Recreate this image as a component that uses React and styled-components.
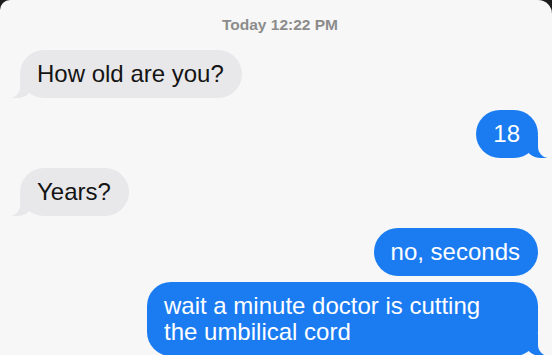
import React from "react";
import styled, { createGlobalStyle, css } from "styled-components";

const PAGE_BG = "#f7f7f7";
const GREY = "#e8e8ea";
const BLUE = "#1b7cf2";

const Global = createGlobalStyle`
  html, body { margin: 0; padding: 0; background: #1c1c1c; }
  body { font-family: "Liberation Sans", Arial, sans-serif; }
`;

const Screen = styled.div`
  width: 552px;
  height: 355px;
  box-sizing: border-box;
  background: ${PAGE_BG};
  border-top-left-radius: 10px;
  border-top-right-radius: 14px;
  overflow: hidden;
  display: flex;
  flex-direction: column;
  padding: 16px 14px 0 20px;
`;

const Stamp = styled.div`
  text-align: center;
  font-size: 15.5px;
  font-weight: 700;
  line-height: 18px;
  color: #8c8c8c;
  padding-left: 2px;
`;

const Row = styled.div`
  display: flex;
  justify-content: ${(p) => (p.$me ? "flex-end" : "flex-start")};
  margin-top: ${(p) => p.$gap}px;
`;

const tailCss = (side, color) => css`
  &::before {
    content: "";
    position: absolute;
    bottom: 0;
    ${side}: -9px;
    width: 22px;
    height: 22px;
    background: ${color};
    ${side === "left"
      ? "border-bottom-right-radius: 16px 14px;"
      : "border-bottom-left-radius: 16px 14px;"}
  }
  &::after {
    content: "";
    position: absolute;
    bottom: 0;
    ${side}: -14px;
    width: 14px;
    height: 22px;
    background: ${PAGE_BG};
    ${side === "left"
      ? "border-bottom-right-radius: 11px;"
      : "border-bottom-left-radius: 11px;"}
  }
`;

const Bubble = styled.div`
  position: relative;
  max-width: 356px;
  padding: 11px 18px 11px 17px;
  border-radius: 24px;
  font-size: 24px;
  line-height: 26px;
  background: ${(p) => (p.$me ? BLUE : GREY)};
  color: ${(p) => (p.$me ? "#ffffff" : "#141414")};
  ${(p) => p.$tail && tailCss(p.$me ? "right" : "left", p.$me ? BLUE : GREY)}
`;

const messages = [
  { text: "How old are you?", me: false, gap: 16, tail: true },
  { text: "18", me: true, gap: 12, tail: true },
  { text: "Years?", me: false, gap: 10, tail: true },
  { text: "no, seconds", me: true, gap: 12, tail: false },
  {
    text: "wait a minute doctor is cutting the umbilical cord",
    me: true,
    gap: 6,
    tail: true,
  },
];

export default function App() {
  return (
    <>
      <Global />
      <Screen>
        <Stamp>Today 12:22 PM</Stamp>
        {messages.map((m, i) => (
          <Row key={i} $me={m.me} $gap={m.gap}>
            <Bubble $me={m.me} $tail={m.tail}>
              {m.text}
            </Bubble>
          </Row>
        ))}
      </Screen>
    </>
  );
}
